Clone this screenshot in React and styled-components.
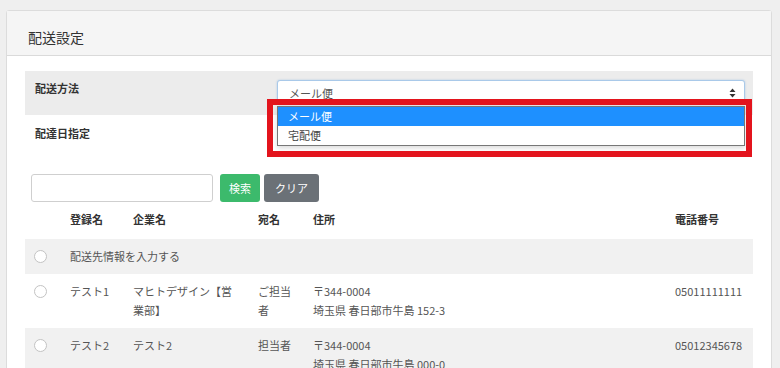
import React from "react";
import styled, { createGlobalStyle } from "styled-components";

const Global = createGlobalStyle`
  html, body { margin: 0; padding: 0; }
  body {
    background: #efefef;
    font-family: "Noto Sans CJK JP", "Noto Sans", sans-serif;
    color: #555;
  }
  * { box-sizing: border-box; }
`;

const Page = styled.div`
  padding: 10px 8px 0 6px;
  width: 780px;
  height: 368px;
  overflow: hidden;
`;

const Card = styled.section`
  background: #fff;
  border: 1px solid #dcdcdc;
  border-radius: 3px;
`;

const CardHeader = styled.header`
  height: 45px;
  padding: 16px 0 0 21px;
  background: #f5f5f5;
  border-bottom: 1px solid #dadada;
  font-size: 14px;
  line-height: 20px;
  color: #333;
`;

const CardBody = styled.div`
  padding: 15px 18px 0;
`;

const FormRow = styled.div`
  display: grid;
  grid-template-columns: 252px 468px;
  height: 44px;
  padding-top: ${(p) => p.$top}px;
  background: ${(p) => (p.$shaded ? "#ececec" : "#fff")};
`;

const Label = styled.div`
  padding-left: 10px;
  font-size: 11px;
  line-height: 17px;
  font-weight: 700;
  color: #333;
`;

const SelectWrap = styled.div`
  position: relative;
`;

const SelectBox = styled.div`
  height: 24px;
  display: flex;
  align-items: center;
  justify-content: space-between;
  padding: 1px 8px 0 11px;
  border: 1px solid #a9c9e9;
  border-radius: 3px;
  background: #fff;
  box-shadow: 0 0 2px rgba(90, 150, 215, 0.45);
  font-size: 11px;
  color: #555;
`;

const Dropdown = styled.ul`
  position: absolute;
  left: 0;
  top: 26px;
  width: 468px;
  margin: 0;
  padding: 0;
  list-style: none;
  background: #fff;
  border: 1px solid #777;
  box-shadow: 0 2px 5px rgba(0, 0, 0, 0.15);
  z-index: 2;
`;

const Option = styled.li`
  height: 19px;
  padding-left: 10px;
  font-size: 11px;
  line-height: 19px;
  background: ${(p) => (p.$active ? "#1e90ff" : "#fff")};
  color: ${(p) => (p.$active ? "#fff" : "#444")};
`;

const Highlight = styled.div`
  position: absolute;
  left: -10px;
  top: 19px;
  width: 485px;
  height: 58px;
  border: 6px solid #e3141d;
  z-index: 3;
  pointer-events: none;
`;

const SearchBar = styled.div`
  display: flex;
  align-items: center;
  margin-top: 15px;
  padding-left: 6px;
`;

const SearchInput = styled.input`
  width: 182px;
  height: 28px;
  border: 1px solid #cfcfcf;
  border-radius: 3px;
  margin: 0 7px 0 0;
  outline: none;
`;

const Button = styled.button`
  height: 28px;
  padding: 0 ${(p) => p.$pad}px;
  border: none;
  border-radius: 3px;
  margin-right: 4px;
  font-family: inherit;
  font-size: 11px;
  color: #fff;
  background: ${(p) => p.$bg};
`;

const Table = styled.div`
  display: grid;
  grid-template-columns: 45px 63px 125px 55px 362px 78px;
`;

const HeadCell = styled.div`
  padding: 8px 0 10px;
  font-size: 11px;
  line-height: 19px;
  font-weight: 700;
  color: #333;
`;

const Row = styled.div`
  display: contents;
  & > div {
    background: ${(p) => (p.$shaded ? "#f1f1f1" : "#fff")};
  }
`;

const Cell = styled.div`
  padding: 8px ${(p) => p.$pr ?? 10}px 8px 0;
  font-size: 11px;
  line-height: 19px;
  color: #555;
  grid-column: ${(p) => p.$span || "auto"};
`;

const RadioCell = styled.div`
  padding: 11px 0 0 9px;
`;

const Radio = styled.span`
  display: block;
  width: 13px;
  height: 13px;
  border: 1px solid #c3c3c3;
  border-radius: 50%;
  background: #fff;
`;

const Arrows = () => (
  <svg width="7" height="10" viewBox="0 0 7 10">
    <path d="M3.5 0.5 L6.5 4 H0.5 Z M3.5 9.5 L6.5 6 H0.5 Z" fill="#333" />
  </svg>
);

const rows = [
  {
    name: "テスト1",
    company: "マヒトデザイン【営業部】",
    to: "ご担当者",
    zip: "〒344-0004",
    addr: "埼玉県 春日部市牛島 152-3",
    tel: "05011111111",
  },
  {
    name: "テスト2",
    company: "テスト2",
    to: "担当者",
    zip: "〒344-0004",
    addr: "埼玉県 春日部市牛島 000-0",
    tel: "05012345678",
  },
];

export default function App() {
  return (
    <>
      <Global />
      <Page>
        <Card>
          <CardHeader>配送設定</CardHeader>
          <CardBody>
            <FormRow $shaded $top={9}>
              <Label>配送方法</Label>
              <SelectWrap>
                <SelectBox>
                  <span>メール便</span>
                  <Arrows />
                </SelectBox>
                <Dropdown>
                  <Option $active>メール便</Option>
                  <Option>宅配便</Option>
                </Dropdown>
                <Highlight />
              </SelectWrap>
            </FormRow>
            <FormRow $top={10}>
              <Label>配達日指定</Label>
            </FormRow>
            <SearchBar>
              <SearchInput />
              <Button $bg="#3cba6c" $pad={9}>検索</Button>
              <Button $bg="#6b7177" $pad={11}>クリア</Button>
            </SearchBar>
            <Table>
              <HeadCell />
              <HeadCell>登録名</HeadCell>
              <HeadCell>企業名</HeadCell>
              <HeadCell>宛名</HeadCell>
              <HeadCell>住所</HeadCell>
              <HeadCell>電話番号</HeadCell>
              <Row $shaded>
                <RadioCell><Radio /></RadioCell>
                <Cell $span="span 5">配送先情報を入力する</Cell>
              </Row>
              {rows.map((r, i) => (
                <Row key={r.name} $shaded={i % 2 === 1}>
                  <RadioCell><Radio /></RadioCell>
                  <Cell>{r.name}</Cell>
                  <Cell $pr={21}>{r.company}</Cell>
                  <Cell $pr={13}>{r.to}</Cell>
                  <Cell>
                    {r.zip}
                    <br />
                    {r.addr}
                  </Cell>
                  <Cell>{r.tel}</Cell>
                </Row>
              ))}
            </Table>
          </CardBody>
        </Card>
      </Page>
    </>
  );
}
